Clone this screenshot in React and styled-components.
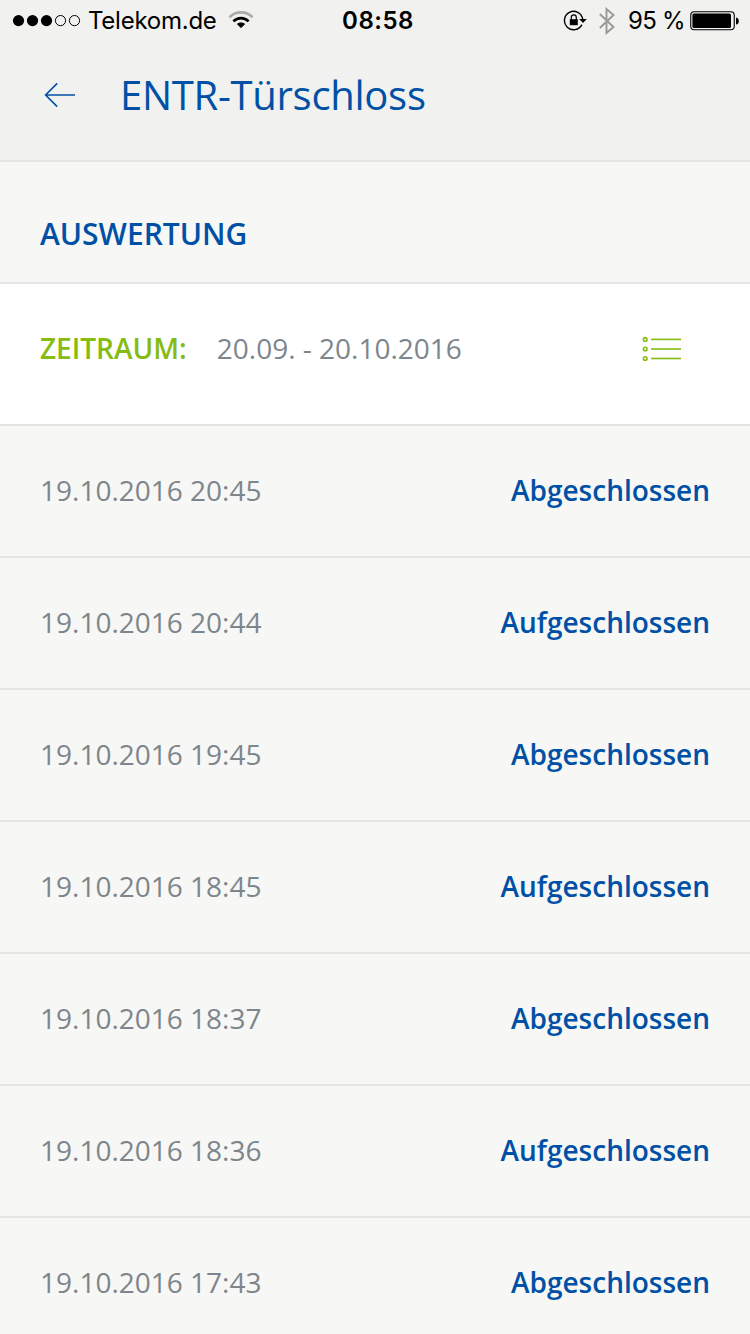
import React from 'react';
import styled, { createGlobalStyle } from 'styled-components';

const GlobalStyle = createGlobalStyle`
  * {
    box-sizing: border-box;
  }

  body {
    margin: 0;
    background: #f7f7f5;
    font-family: 'Open Sans', 'Noto Sans', sans-serif;
  }
`;

const Screen = styled.main`
  display: flex;
  flex-direction: column;
  width: 750px;
  height: 1334px;
  overflow: hidden;
  background: #f7f7f5;

  > * {
    flex-shrink: 0;
  }
`;

const StatusBar = styled.div`
  display: grid;
  grid-template-columns: 1fr auto 1fr;
  align-items: center;
  height: 42px;
  padding: 0 10px 0 12px;
  background: #f1f1ef;
  color: #000;
  font-family: Inter, 'Liberation Sans', sans-serif;
  font-size: 24px;
  line-height: 42px;
  white-space: nowrap;
`;

const StatusGroup = styled.div`
  display: flex;
  align-items: center;
  justify-content: ${({ $end }) => ($end ? 'flex-end' : 'flex-start')};
  height: 42px;
`;

const Carrier = styled.span`
  margin: 0 11px 0 7px;
  letter-spacing: -0.25px;
`;

const Clock = styled.span`
  padding-left: 4px;
  font-weight: 600;
  letter-spacing: 0.5px;
`;

const Percent = styled.span`
  margin: 0 5px 0 12px;
  letter-spacing: -0.7px;
`;

const Header = styled.header`
  display: flex;
  align-items: center;
  height: 120px;
  padding: 0 40px 12px;
  border-bottom: 2px solid #e5e5e3;
  background: #f1f1ef;
`;

const Title = styled.h1`
  margin: 0 0 0 40px;
  color: #0050a5;
  font-size: 40px;
  font-weight: 400;
  letter-spacing: -0.28px;
  line-height: 56px;
`;

const Section = styled.div`
  display: flex;
  align-items: flex-end;
  height: 122px;
  padding: 0 40px 28px;
  border-bottom: 2px solid #e5e5e3;
`;

const SectionTitle = styled.h2`
  margin: 0;
  color: #0050a5;
  font-size: 30px;
  font-weight: 600;
  line-height: 40px;
`;

const Period = styled.div`
  display: flex;
  align-items: center;
  height: 142px;
  padding: 0 68px 12px 40px;
  border-bottom: 2px solid #e5e5e0;
  background: #fff;
  font-size: 28px;
  line-height: 38px;
`;

const PeriodLabel = styled.span`
  color: #86bc10;
  font-weight: 600;
`;

const PeriodValue = styled.span`
  margin-left: 30px;
  color: #7d868c;
`;

const IconButton = styled.button`
  display: flex;
  padding: 0;
  border: 0;
  background: none;
`;

const ListButton = styled(IconButton)`
  margin-left: auto;
  padding-top: 2px;
`;

const Entries = styled.ul`
  margin: 0;
  padding: 0;
  list-style: none;
`;

const Entry = styled.li`
  display: flex;
  align-items: center;
  justify-content: space-between;
  height: 132px;
  padding: 0 40px 2px;
  border-bottom: 2px solid #e5e5e3;
  font-size: 28px;
  line-height: 38px;
`;

const Timestamp = styled.time`
  color: #7d868c;
`;

const State = styled.span`
  color: #0050a5;
  font-weight: 600;
`;

const SignalIcon = () => (
  <svg width="69" height="14" viewBox="0 0 69 14">
    <circle cx="6.5" cy="6.6" r="5.6" />
    <circle cx="20.5" cy="6.6" r="5.6" />
    <circle cx="34.5" cy="6.6" r="5.6" />
    <circle cx="48.5" cy="6.6" r="5.1" fill="none" stroke="#000" />
    <circle cx="62.5" cy="6.6" r="5.1" fill="none" stroke="#000" />
  </svg>
);

const WifiIcon = () => (
  <svg width="26" height="20" viewBox="0 0 26 20" fill="none" strokeWidth="2.7">
    <path d="M1.5 6.3C8-.2 18-.2 24.5 6.3" stroke="#ababaa" />
    <path d="M5.4 10.4C9.8 6.1 16.2 6.1 20.6 10.4" stroke="#000" />
    <path d="M9.4 13.1C11.4 11.5 14.6 11.5 16.6 13.1L13 16.6Z" fill="#000" stroke="#000" strokeWidth="1" />
  </svg>
);

const RotationLockIcon = () => (
  <svg width="24" height="22" viewBox="0 0 24 22">
    <path
      d="M19.7 9A9.2 9.2 0 1 0 18.9 14.6"
      fill="none"
      stroke="#000"
      strokeWidth="1.4"
    />
    <path d="M16.2 9H23.8L20 13Z" />
    <rect x="6.8" y="9.2" width="8" height="6" />
    <path
      d="M8.3 10V7.4A2.5 2.5 0 0 1 13.3 7.4V10"
      fill="none"
      stroke="#000"
      strokeWidth="1.2"
    />
  </svg>
);

const BluetoothIcon = styled.svg`
  margin-left: 11px;
`;

const BatteryIcon = () => (
  <svg width="50" height="20" viewBox="0 0 50 20">
    <rect
      x="0.75"
      y="0.75"
      width="43.5"
      height="18"
      rx="3.5"
      fill="none"
      stroke="#000"
      strokeWidth="1.1"
    />
    <rect x="2.4" y="2.5" width="38.6" height="14.6" rx="1.5" />
    <path d="M46 6.4C49.8 7 49.8 13 46 13.6Z" />
  </svg>
);

const ArrowIcon = () => (
  <svg
    width="40"
    height="28"
    viewBox="0 0 40 28"
    fill="none"
    stroke="#0050a5"
    strokeWidth="1.6"
  >
    <path d="M35 14H5.6M17.2 2.4L5.6 14L17.2 25.6" />
  </svg>
);

const ListIcon = () => (
  <svg
    width="40"
    height="26"
    viewBox="0 0 40 26"
    fill="none"
    stroke="#86bc10"
    strokeWidth="1.6"
  >
    {[3.4, 13, 22.5].map((y) => (
      <React.Fragment key={y}>
        <circle cx="3.2" cy={y} r="1.8" />
        <path d={`M9 ${y}H39`} />
      </React.Fragment>
    ))}
  </svg>
);

const entries = [
  { time: '19.10.2016 20:45', state: 'Abgeschlossen' },
  { time: '19.10.2016 20:44', state: 'Aufgeschlossen' },
  { time: '19.10.2016 19:45', state: 'Abgeschlossen' },
  { time: '19.10.2016 18:45', state: 'Aufgeschlossen' },
  { time: '19.10.2016 18:37', state: 'Abgeschlossen' },
  { time: '19.10.2016 18:36', state: 'Aufgeschlossen' },
  { time: '19.10.2016 17:43', state: 'Abgeschlossen' },
];

const App = () => (
  <Screen>
    <GlobalStyle />
    <StatusBar>
      <StatusGroup>
        <SignalIcon />
        <Carrier>Telekom.de</Carrier>
        <WifiIcon />
      </StatusGroup>
      <Clock>08:58</Clock>
      <StatusGroup $end>
        <RotationLockIcon />
        <BluetoothIcon width="18" height="28" viewBox="0 0 18 28">
          <path
            d="M1.8 7L15.5 20L8.5 26V2L15.5 8L1.8 21"
            fill="none"
            stroke="#999"
            strokeWidth="1.9"
          />
        </BluetoothIcon>
        <Percent>95 %</Percent>
        <BatteryIcon />
      </StatusGroup>
    </StatusBar>
    <Header>
      <IconButton>
        <ArrowIcon />
      </IconButton>
      <Title>ENTR-Türschloss</Title>
    </Header>
    <Section>
      <SectionTitle>AUSWERTUNG</SectionTitle>
    </Section>
    <Period>
      <PeriodLabel>ZEITRAUM:</PeriodLabel>
      <PeriodValue>20.09. - 20.10.2016</PeriodValue>
      <ListButton>
        <ListIcon />
      </ListButton>
    </Period>
    <Entries>
      {entries.map(({ time, state }) => (
        <Entry key={time}>
          <Timestamp>{time}</Timestamp>
          <State>{state}</State>
        </Entry>
      ))}
    </Entries>
  </Screen>
);

export default App;
